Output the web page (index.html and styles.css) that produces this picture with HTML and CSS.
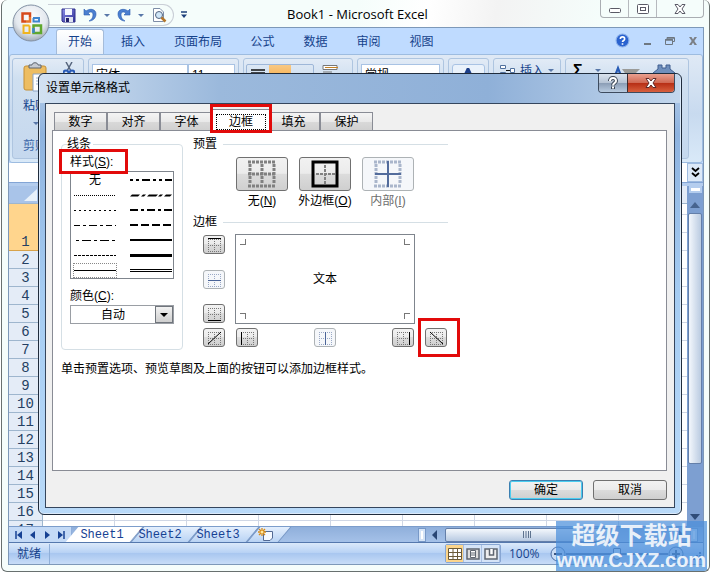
FILE: index.html
```html
<!DOCTYPE html>
<html lang="zh-CN">
<head>
<meta charset="utf-8">
<title>Book1 - Microsoft Excel</title>
<link rel="stylesheet" href="styles.css">
</head>
<body>
<svg width="0" height="0" class="defs" aria-hidden="true">
  <defs>
    <g id="grid-dots" fill="none" stroke-width="1" stroke-dasharray="1 1">
      <path d="M4 3.500H17M4 9.500H17M4 15.500H17M4.500 3V16M10.500 3V16M16.500 3V16"/>
    </g>
    <radialGradient id="orb" cx="50%" cy="35%" r="65%">
      <stop offset="0" stop-color="#fff"/><stop offset=".65" stop-color="#e3e8ee"/><stop offset="1" stop-color="#a3acb8"/>
    </radialGradient>
    <linearGradient id="disk" x1="0" y1="0" x2="1" y2="1">
      <stop offset="0" stop-color="#8b8fe8"/><stop offset="1" stop-color="#2f2f96"/>
    </linearGradient>
  </defs>
</svg>
<div class="window">
  <header class="titlebar">
    <div class="qat">
      <button aria-label="保存"><svg width="15" height="15" viewBox="0 0 15 15"><path d="M1 1H14V14H2L1 13Z" fill="url(#disk)" stroke="#31318c"/><path d="M4 1H11V7H4Z" fill="#f4f7ff"/><path d="M4 9H12V14H4Z" fill="#dfe3f0"/><path d="M5 10H8V14H5Z" fill="#23236e"/></svg></button>
      <button aria-label="撤消"><svg width="14" height="14" viewBox="0 0 14 14"><path d="M1 1V7H7L5 5C8 3 10 4 10 7C10 10 8 12 6 13C10 13 13 10 13 6C13 1 7 0 3 3Z" fill="#4b7fd0" stroke="#2c5eb0" stroke-width=".6"/></svg></button>
      <i class="caret"></i>
      <button aria-label="恢复"><svg width="14" height="14" viewBox="0 0 14 14"><path d="M13 1V7H7L9 5C6 3 4 4 4 7C4 10 6 12 8 13C4 13 1 10 1 6C1 1 7 0 11 3Z" fill="#4b7fd0" stroke="#2c5eb0" stroke-width=".6"/></svg></button>
      <i class="caret"></i>
      <button aria-label="打印预览"><svg width="16" height="16" viewBox="0 0 16 16"><path d="M2.500 1.500H9L12.500 5V14.500H2.500Z" fill="#fff" stroke="#7d8da6"/><circle cx="8" cy="8" r="3.500" fill="#cfe6f7" stroke="#52647f"/><path d="M10.500 10.500L14.500 14.500" stroke="#b4762a" stroke-width="2.500"/></svg></button>
    </div>
    <svg class="more" width="8" height="8" viewBox="0 0 8 8"><path d="M1 1H7" stroke="#1d3f7a" stroke-width="1.500"/><path d="M1 3.500H7L4 7Z" fill="#1d3f7a"/></svg>
    <h1>Book1 - Microsoft Excel</h1>
    <div class="winbtns">
      <button aria-label="最小化"><svg width="14" height="12" viewBox="0 0 14 12"><rect x="1.500" y="5.500" width="11" height="4" rx="1" fill="#fff" stroke="#5a5a66"/></svg></button>
      <button aria-label="最大化"><svg width="14" height="12" viewBox="0 0 14 12"><rect x="1.500" y="1.500" width="11" height="9" rx="1" fill="#fff" stroke="#5a5a66"/><rect x="4.500" y="4.500" width="5" height="3" fill="#fff" stroke="#5a5a66"/></svg></button>
      <button class="wide" aria-label="关闭"><svg width="14" height="12" viewBox="0 0 14 12"><path d="M2 1.500H5L7 4L9 1.500H12L9 6L12 10.500H9L7 8L5 10.500H2L5 6Z" fill="#fff" stroke="#5a5a66"/></svg></button>
    </div>
  </header>
  <button class="office" aria-label="Office 按钮"><svg width="38" height="38" viewBox="0 0 38 38">
    <circle cx="19" cy="19" r="18" fill="url(#orb)" stroke="#8290a3"/>
    <g fill="none" stroke-width="2.500">
      <path d="M18 13V9.500H10.500V17.500H14" stroke="#d64a1c"/><path d="M14 17.500H18V13" stroke="#e8762a"/>
      <path d="M21 14H27V17.500H21.500V14" stroke="#3f86cf" stroke-width="2"/>
      <path d="M17.500 21.500H11.500V29H17.500V21.500" stroke="#f0b41e" stroke-width="2"/>
      <path d="M21.500 21.500H29V29H21.500Z" stroke="#5fa82e"/><path d="M21.500 29V24" stroke="#3d86c8"/>
    </g></svg></button>

  <div class="frame">
    <nav class="ribbon-tabs">
      <button class="on">开始</button><button>插入</button><button class="w2">页面布局</button><button>公式</button><button>数据</button><button>审阅</button><button>视图</button>
      <div class="docbtns">
        <svg width="15" height="15" viewBox="0 0 14 14"><circle cx="7" cy="7" r="6" fill="#2a62cf" stroke="#8bb0ea"/><path d="M5 5.500C5 3 9 3 9 5.500C9 7 7 7 7 8.500M7 9.500V11" fill="none" stroke="#fff" stroke-width="1.500"/></svg>
        <svg width="9" height="10" viewBox="0 0 9 10"><path d="M1 8H8" stroke="#6e7780" stroke-width="2"/></svg>
        <svg width="10" height="10" viewBox="0 0 10 10"><path d="M2 3V1.500H9.500V5.500H8M.5 3.500H7.500V8.500H.5Z" fill="none" stroke="#6e7780"/><path d="M0 4H8M2 2H9" stroke="#6e7780" stroke-width="1.500"/></svg>
        <svg width="10" height="10" viewBox="0 0 10 10"><path d="M1 1H3.500L5 3.500L6.500 1H9L6.300 5L9 9H6.500L5 6.500L3.500 9H1L3.700 5Z" fill="#7b7f85"/></svg>
      </div>
    </nav>
    <div class="ribbon">
      <section class="group clip">
        <div class="clip-icons">
          <svg width="26" height="30" viewBox="0 0 26 30"><rect x="1" y="4" width="22" height="24" rx="2" fill="#edbd62" stroke="#c58f35"/><path d="M6 6V3H9C9 0 15 0 15 3H18V6Z" fill="#c5cad2" stroke="#5d646e"/><path d="M10 12H25V29H10Z" fill="#fff" stroke="#8ba3c4"/><path d="M13 16H22M13 19H22M13 22H22" stroke="#9cb3d4"/></svg>
          <svg width="12" height="18" viewBox="0 0 12 18"><path d="M3 0L8 9M9 0L4 9" stroke="#56657d" stroke-width="1.500"/><circle cx="3" cy="11" r="2.500" fill="none" stroke="#2a5cb8" stroke-width="2"/><circle cx="9" cy="11" r="2.500" fill="none" stroke="#2a5cb8" stroke-width="2"/></svg>
        </div>
        <span class="paste">粘贴</span><i class="caret"></i><span class="gname">剪贴板</span>
      </section>
      <section class="group font"><select aria-label="字体"><option>宋体</option></select><select class="size" aria-label="字号"><option>11</option></select></section>
      <section class="group align">
        <div class="alignset"><span><svg width="14" height="10" viewBox="0 0 14 10"><path d="M0 1H14M0 4H14M0 7H14" stroke="#111" stroke-width="1.500"/></svg></span><span class="lit"><svg width="14" height="10" viewBox="0 0 14 10"><path d="M0 5H14M2 8H12" stroke="#111" stroke-width="1.500"/></svg></span><span></span></div>
        <svg width="18" height="12" viewBox="0 0 18 12"><path d="M1 1.500H15V5.500H1Z" fill="#fff" stroke="#777"/><path d="M3 3.500H16" stroke="#c68224"/><path d="M1 8H10M1 11H8" stroke="#777"/></svg>
      </section>
      <section class="group num"><select aria-label="数字格式"><option>常规</option></select></section>
      <section class="group style"><div class="stylebox"><svg width="18" height="14" viewBox="0 0 18 14"><path d="M2 14L8 1L14 14" fill="none" stroke="#1c3f8a" stroke-width="3"/></svg></div></section>
      <section class="group cells"><svg width="17" height="12" viewBox="0 0 17 12"><path d="M1.500 1.500H6.500V4.500H1.500ZM1.500 8.500H6.500V11H1.500ZM11.500 4.500H15.500V8.500H11.500Z" fill="#fff" stroke="#51719e"/><path d="M7 6.500H11" stroke="#111"/></svg><span>插入</span><i class="caret"></i></section>
      <section class="group edit"><b>Σ</b><i class="caret"></i><svg width="28" height="14" viewBox="0 0 28 14"><path d="M0 14L5 1L10 14H7L5 7L3 14Z" fill="#275bb5"/><path d="M9 5H27L20 12H14Z" fill="#9b9b98"/></svg><svg width="22" height="12" viewBox="0 0 22 12"><path d="M5 1H9V4H13V1H17V5L22 9V12H0V9L5 5Z" fill="#6f8fbc" stroke="#405f90"/></svg></section>
    </div>
    <div class="formula"><input aria-label="编辑栏"><button aria-label="展开编辑栏"><svg width="9" height="12" viewBox="0 0 9 12"><path d="M1 1L4.500 4L8 1M1 6L4.500 9L8 6" fill="none" stroke="#000" stroke-width="1.800"/></svg></button></div>

    <div class="sheet">
      <div class="rows">
        <div class="corner"><svg width="14" height="12" viewBox="0 0 14 12"><path d="M14 0V12H1Z" fill="#e8f1fb"/></svg></div>
        <div class="tall">1</div><div>2</div><div>3</div><div>4</div><div>5</div><div>6</div><div>7</div><div>8</div><div>9</div><div>10</div><div>11</div><div>12</div><div>13</div><div>14</div><div>15</div><div>16</div><div>17</div>
      </div>
      <div class="cellarea"><div class="colhead"></div><div class="cells-grid"></div></div>
      <div class="vscroll"><i class="split"></i><svg width="10" height="6" viewBox="0 0 10 6"><path d="M5 0L10 6H0Z" fill="#47648f"/></svg><i class="thumb"></i><i class="track"></i><svg width="10" height="6" viewBox="0 0 10 6"><path d="M0 0H10L5 6Z" fill="#2f4c78"/></svg></div>
    </div>

    <div class="tabbar">
      <div class="nav">
        <svg width="8" height="8" viewBox="0 0 8 8"><path d="M1 0V8" stroke="#164193" stroke-width="1.500"/><path d="M7 0V8L2 4Z" fill="#164193"/></svg>
        <svg width="8" height="8" viewBox="0 0 8 8"><path d="M6 0V8L1 4Z" fill="#164193"/></svg>
        <svg width="8" height="8" viewBox="0 0 8 8"><path d="M2 0V8L7 4Z" fill="#164193"/></svg>
        <svg width="8" height="8" viewBox="0 0 8 8"><path d="M7 0V8" stroke="#164193" stroke-width="1.500"/><path d="M1 0V8L6 4Z" fill="#164193"/></svg>
      </div>
      <button class="stab on"><span>Sheet1</span></button><button class="stab"><span>Sheet2</span></button><button class="stab"><span>Sheet3</span></button>
      <button class="stab new" aria-label="插入工作表"><svg width="16" height="14" viewBox="0 0 16 14"><path d="M5.500 3.500H14.500V10L12 12.500H5.500Z" fill="#f5f9ff" stroke="#536a94"/><path d="M4 0V8M0 4H8M1 1L7 7M7 1L1 7" stroke="#d78a16" stroke-width="1.300"/><circle cx="4" cy="4" r="1.500" fill="#ffe9a0"/></svg></button>
      <div class="hscroll"><i class="hsplit"></i><svg width="6" height="10" viewBox="0 0 6 10"><path d="M5 0V10L0 5Z" fill="#294675"/></svg><div class="hthumb"><svg width="8" height="7" viewBox="0 0 8 7"><path d="M.5 0V7M3 0V7M5.500 0V7M7.500 0V7" stroke="#5e738f"/></svg></div><svg width="6" height="10" viewBox="0 0 6 10"><path d="M1 0V10L6 5Z" fill="#294675"/></svg><i class="hsplit"></i></div>
    </div>
    <footer class="status">
      <span class="ready">就绪</span>
      <div class="views">
        <button class="on" aria-label="普通"><svg width="14" height="12" viewBox="0 0 14 12"><path d="M.5 .5H13.500V11.500H.5ZM.5 4.500H13.500M.5 8.500H13.500M5 .5V11.500M9.500 .5V11.500" fill="#fff" stroke="#6a5a38"/></svg></button>
        <button aria-label="页面布局"><svg width="14" height="12" viewBox="0 0 14 12"><path d="M1 1H13V11H1Z" fill="#ddd" stroke="#5f6670" stroke-width="1.500"/><path d="M4.500 2.500H9.500V9.500H4.500Z" fill="#fff" stroke="#5f6670"/><path d="M5 5H9M5 7H9" stroke="#5f6670"/></svg></button>
        <button aria-label="分页预览"><svg width="14" height="12" viewBox="0 0 14 12"><path d="M1 1H13V11H1Z" fill="#eee" stroke="#5f6670" stroke-width="1.500"/><path d="M5.500 1V7H9.500V1M9.500 7V1" fill="#fff" stroke="#5f6670" stroke-width="1.500"/></svg></button>
      </div>
      <span class="pct">100%</span>
      <svg width="16" height="16" viewBox="0 0 16 16"><circle cx="8" cy="8" r="7" fill="#cadcf4" stroke="#4c6ea5"/><path d="M4 8H12" stroke="#3d5680" stroke-width="2"/></svg>
      <input type="range" aria-label="缩放" min="0" max="100" value="50">
      <svg width="16" height="16" viewBox="0 0 16 16"><circle cx="8" cy="8" r="7" fill="#cadcf4" stroke="#4c6ea5"/><path d="M4 8H12M8 4V12" stroke="#3d5680" stroke-width="2"/></svg>
      <svg class="grip" width="9" height="9" viewBox="0 0 9 9"><path d="M6 0H8V2H6ZM6 3H8V5H6ZM3 3H5V5H3ZM6 6H8V8H6ZM3 6H5V8H3ZM0 6H2V8H0Z" fill="#3f66a3"/></svg>
    </footer>
  </div>

  <div class="dialog" role="dialog" aria-labelledby="dlg-title">
    <div class="dlg-title"><h2 id="dlg-title">设置单元格格式</h2>
      <div class="dlg-btns">
        <button aria-label="帮助"><svg width="12" height="14" viewBox="0 0 12 14"><path d="M3 5C3 1 9 1 9 5C9 7 6 7 6 9.500M6 10.500V13" fill="none" stroke="#3a4655" stroke-width="4"/><path d="M3 5C3 1 9 1 9 5C9 7 6 7 6 9.500M6 10.500V12.500" fill="none" stroke="#fff" stroke-width="2"/></svg></button>
        <button class="x" aria-label="关闭"><svg width="14" height="12" viewBox="0 0 14 12"><path d="M2 1.500H5L7 4L9 1.500H12L9 6L12 10.500H9L7 8L5 10.500H2L5 6Z" fill="#fff" stroke="#5f2a2a"/></svg></button>
      </div>
    </div>
    <div class="client">
      <div class="tabs" role="tablist">
        <button role="tab">数字</button><button role="tab">对齐</button><button role="tab">字体</button><button role="tab" class="on" aria-selected="true"><span>边框</span><i class="callout"></i></button><button role="tab">填充</button><button role="tab">保护</button>
      </div>
      <div class="page">
        <div class="cols">
          <fieldset>
            <legend>线条</legend>
            <div class="lbl marked" id="style-label">样式(<u>S</u>):<i class="callout"></i></div>
            <div class="linebox" role="listbox" aria-labelledby="style-label">
              <button role="option">无</button>
              <button role="option" aria-label="双点划线 粗"><svg viewBox="0 0 42 9"><path d="M0 4H42" stroke-width="2" stroke-dasharray="3 3 3 3 8 3"/></svg></button>
              <button role="option" aria-label="点线"><svg viewBox="0 0 42 9"><path d="M0 4.500H42" stroke-dasharray="1 1"/></svg></button>
              <button role="option" aria-label="斜点划线"><svg viewBox="0 0 42 9"><path d="M0 5.500H8L10 3.500H2ZM11 5.500H14L16 3.500H13ZM17 5.500H26L28 3.500H19ZM28 5.500H31L33 3.500H30ZM34 5.500H40L42 3.500H36Z" fill="#000" stroke="none"/></svg></button>
              <button role="option" aria-label="短划线"><svg viewBox="0 0 42 9"><path d="M0 4.500H42" stroke-dasharray="2 3"/></svg></button>
              <button role="option" aria-label="点划线 粗"><svg viewBox="0 0 42 9"><path d="M0 4H42" stroke-width="2" stroke-dasharray="8 3 3 3"/></svg></button>
              <button role="option" aria-label="双点划线"><svg viewBox="0 0 42 9"><path d="M0 4.500H42" stroke-dasharray="6 3 3 3 8 3 3 3"/></svg></button>
              <button role="option" aria-label="虚线 粗"><svg viewBox="0 0 42 9"><path d="M0 4H42" stroke-width="2" stroke-dasharray="8 3"/></svg></button>
              <button role="option" aria-label="点划线"><svg viewBox="0 0 42 9"><path d="M2 4.500H42" stroke-dasharray="3 3 9 3"/></svg></button>
              <button role="option" aria-label="中等实线"><svg viewBox="0 0 42 9"><path d="M0 4H42" stroke-width="2"/></svg></button>
              <button role="option" aria-label="虚线"><svg viewBox="0 0 42 9"><path d="M0 4.500H42" stroke-dasharray="3 1"/></svg></button>
              <button role="option" aria-label="粗实线"><svg viewBox="0 0 42 9"><path d="M0 4.500H42" stroke-width="3"/></svg></button>
              <button role="option" aria-selected="true" class="sel" aria-label="细实线"><svg viewBox="0 0 42 9"><path d="M0 4.500H42"/></svg></button>
              <button role="option" aria-label="双线"><svg viewBox="0 0 42 9"><path d="M0 3.500H42M0 5.500H42"/></svg></button>
            </div>
            <label class="lbl color" for="color">颜色(<u>C</u>):</label>
            <div class="combo"><select id="color"><option>自动</option></select><span><svg width="8" height="4" viewBox="0 0 8 4"><path d="M0 0H8L4 4Z"/></svg></span></div>
          </fieldset>
          <div class="right">
            <h3>预置</h3>
            <div class="presets">
              <div><button id="p-none"><svg width="28" height="28" viewBox="0 0 28 28"><path d="M0 2H28M0 14H28M0 26H28M2 4V24M14 4V24M26 4V24" stroke="#808080" stroke-width="3" stroke-dasharray="3 1"/></svg></button><label for="p-none">无(<u>N</u>)</label></div>
              <div><button id="p-out"><svg width="28" height="28" viewBox="0 0 28 28"><path d="M2 2H26V26H2Z" fill="none" stroke="#000" stroke-width="3"/><path d="M5 14H24M14 5V24" stroke="#808080" stroke-width="2" stroke-dasharray="3 1"/></svg></button><label for="p-out">外边框(<u>O</u>)</label></div>
              <div class="off"><button id="p-in" disabled><svg width="28" height="28" viewBox="0 0 28 28"><path d="M0 2H28M0 26H28M2 4V24M26 4V24" stroke="#aab6cb" stroke-width="3" stroke-dasharray="3 1"/><path d="M1 14H27M14 1V27" stroke="#536c9c" stroke-width="2"/></svg></button><label for="p-in">内部(<u>I</u>)</label></div>
            </div>
            <h3>边框</h3>
            <div class="borders">
              <div class="side">
                <button aria-label="上边框"><svg viewBox="0 0 20 17"><use href="#grid-dots"/><path d="M4 2.500H17" class="k"/></svg></button>
                <button disabled aria-label="内部横线"><svg viewBox="0 0 20 17"><use href="#grid-dots"/><path d="M4 9.500H17" class="k"/></svg></button>
                <button aria-label="下边框"><svg viewBox="0 0 20 17"><use href="#grid-dots"/><path d="M4 15.500H17" class="k"/></svg></button>
              </div>
              <div class="preview"><i></i><i></i><span>文本</span><i></i><i></i></div>
              <span></span>
              <button aria-label="左斜线"><svg viewBox="0 0 20 17"><use href="#grid-dots"/><path d="M4 15L17 3" class="k"/></svg></button>
              <div class="below">
                <button aria-label="左边框"><svg viewBox="0 0 20 17"><use href="#grid-dots"/><path d="M4.500 3V16" class="k"/></svg></button>
                <button disabled aria-label="内部竖线"><svg viewBox="0 0 20 17"><use href="#grid-dots"/><path d="M10.500 3V16" class="k"/></svg></button>
                <button aria-label="右边框"><svg viewBox="0 0 20 17"><use href="#grid-dots"/><path d="M16.500 3V16" class="k"/></svg></button>
              </div>
              <button class="marked" aria-label="右斜线"><svg viewBox="0 0 20 17"><use href="#grid-dots"/><path d="M4 3L17 15" class="k"/></svg><i class="callout"></i></button>
            </div>
          </div>
        </div>
        <p>单击预置选项、预览草图及上面的按钮可以添加边框样式。</p>
      </div>
      <div class="actions"><button class="default">确定</button><button>取消</button></div>
    </div>
  </div>
  <div class="watermark"><b>超级下载站</b><b class="url">www.CJXZ.com</b></div>
</div>
</body>
</html>
```
FILE: styles.css
```css
* { box-sizing: border-box; }
body {
  margin: 0;
  font: 12px/14px "Liberation Sans", "Noto Sans CJK SC", sans-serif;
  color: #000;
  background: #fff;
}
button, input, select { font: inherit; color: inherit; margin: 0; padding: 0; border: 0; background: none; }
select { appearance: none; }
svg { display: block; flex: none; }
h1, h2, h3, p { margin: 0; font-size: 12px; font-weight: normal; }
.defs { position: absolute; }

/* application window */
.window {
  position: relative;
  display: flex;
  flex-direction: column;
  height: 100vh;
  overflow: hidden;
  margin: 0 2px 0 1px;
  padding: 0 5px 6px 6px;
  background: #f5fdfb;
  border: 1px solid #68706f;
  border-top: 0;
  border-radius: 6px;
}
.titlebar {
  display: flex;
  flex: none;
  height: 27px;
  padding-left: 40px;
  background: linear-gradient(100deg, #f5fdfb 50%, #fff 60%, #f3f3f3 70%, #f5fdfb 85%);
}
.qat {
  display: flex;
  align-items: center;
  gap: 7px;
  width: 126px;
  height: 22px;
  margin-top: 4px;
  padding-left: 13px;
  border: 1px solid #c9ced6;
  border-left: 0;
  border-radius: 0 12px 12px 0;
}
.more { margin: 11px 0 0 6px; }
.caret { flex: none; border: 3px solid transparent; border-top: 3px solid #5877a8; border-bottom: 0; }
.titlebar h1 {
  flex: 1;
  padding-left: 99px;
  font-family: "Open Sans", "Noto Sans", sans-serif;
  font-size: 13px;
  line-height: 28px;
  white-space: nowrap;
}
.winbtns {
  display: flex;
  height: 18px;
  border: 1px solid #a9adb2;
  border-top: 0;
  border-radius: 0 0 4px 4px;
}
.winbtns button { display: grid; place-items: center; width: 28px; border-right: 1px solid #b6b9be; }
.winbtns .wide { width: 46px; border: 0; }
.office { position: absolute; left: 10px; top: 4px; z-index: 1; }

.frame { display: flex; flex: 1; flex-direction: column; min-height: 0; border: 1px solid #7d98b8; background: #bfdbff; }

/* ribbon */
.ribbon-tabs { display: flex; flex: none; height: 26px; padding-left: 47px; align-items: flex-end; color: #15428b; }
.ribbon-tabs button { width: 48px; height: 25px; margin-right: 5px; }
.ribbon-tabs button:nth-child(n + 4) { width: 53px; margin: 0; }
.ribbon-tabs .on { background: linear-gradient(#fff, #e8f0fa); border: 1px solid #a5bcda; border-bottom: 0; border-radius: 3px 3px 0 0; }
.ribbon-tabs .w2 { width: 72px; margin-right: 2px; }
.docbtns { display: flex; align-items: center; gap: 13px; margin-left: auto; padding: 0 5px 6px 0; }
.ribbon {
  display: flex;
  flex: none;
  gap: 4px;
  height: 109px;
  padding: 3px 2px;
  background: linear-gradient(#dfe9f5, #c8daef 55%, #d9e9f8);
  border: 1px solid #9dbce0;
  border-radius: 3px;
}
.group { display: flex; flex: none; gap: 4px; align-items: flex-start; padding: 5px 3px; border: 1px solid #aec5e0; border-radius: 3px; background: linear-gradient(#e2ebf6, #cfdff0 20%, #c5d8ee); }
.clip { flex-direction: column; width: 72px; padding: 3px 10px; color: #15428b; gap: 7px; }
.clip-icons { display: flex; gap: 14px; }
.clip .caret { margin: 2px 0 0 10px; }
.gname { margin-top: 7px; color: #3e6aaa; white-space: nowrap; }
.font { width: 151px; gap: 0; }
.font select, .num select {
  width: 96px;
  height: 22px;
  padding-left: 3px;
  background: conic-gradient(from -45deg at 50% 100%, #5877a8 90deg, transparent 0) right 6px top 9px / 6px 3px no-repeat #fff;
  background: linear-gradient(#5877a8, #5877a8) right 6px top 9px / 6px 2px no-repeat #fff;
  border: 1px solid #a9c3e4;
}
.font .size { width: 47px; }
.align { width: 110px; padding-left: 2px; gap: 8px; }
.alignset { display: flex; border: 1px solid #9eb7d8; border-radius: 2px; }
.alignset span { display: grid; place-items: center; width: 22px; height: 18px; }
.alignset .lit { background: linear-gradient(#f7c884, #fba93c); }
.num { width: 87px; }
.num select { width: 80px; }
.style { width: 41px; }
.stylebox { width: 33px; height: 24px; padding: 3px 7px; background: #eaf2fb; border: 1px solid #a9c3e4; border-radius: 3px; }
.cells { width: 68px; padding-left: 5px; color: #15428b; white-space: nowrap; }
.cells .caret, .edit .caret { margin-top: 5px; }
.edit { width: 124px; padding-left: 7px; gap: 12px; }
.edit b { font-size: 16px; }

.formula { display: flex; flex: none; height: 20px; background: #fff; border-bottom: 1px solid #83a5d5; }
.formula input { flex: 1; min-width: 0; }
.formula button { display: grid; place-items: center; width: 16px; background: #dce9f8; border: 1px solid #9ebbe0; }

/* worksheet */
.sheet { display: flex; flex: 1; min-height: 0; overflow: hidden; border-top: 3px solid #b4cdee; }
.rows { width: 34px; overflow: hidden; font: 14px/16px "Liberation Mono", monospace; color: #243f62; text-align: center; background: #e4ecf7; border-right: 1px solid #9eb6ce; }
.rows > div { height: 18px; padding-top: 1px; border-bottom: 1px solid #9eb6ce; }
.rows .tall { display: flex; align-items: flex-end; justify-content: center; height: 47px; background: #ffd58d; border-color: #d7a24a; }
.rows .corner { display: flex; justify-content: flex-end; padding: 3px 5px; background: #a9c4e9; }
.cellarea { display: flex; flex: 1; flex-direction: column; }
.colhead { height: 18px; background: #e4ecf7; border-bottom: 1px solid #9eb6ce; }
.cells-grid {
  flex: 1;
  background:
    repeating-linear-gradient(90deg, transparent 0 71px, #d0d7e5 71px 72px),
    repeating-linear-gradient(#fff 0 10px, #d0d7e5 10px 11px, #fff 11px 18px);
}
.vscroll { display: flex; flex-direction: column; align-items: center; width: 16px; background: #7d9fd1; }
.split { width: 13px; height: 7px; margin-bottom: 9px; background: #fff; border: 2px solid #b4cdee; }
.thumb { flex: 5; width: 14px; margin-top: 5px; background: linear-gradient(90deg, #f3f7fc, #bacbe1); border: 1px solid #647fa9; border-radius: 2px; }
.track { flex: 1; }
.vscroll svg:last-child { margin-bottom: 6px; }

.tabbar { display: flex; flex: none; height: 17px; background: linear-gradient(#8fafdb, #a5c1e8); border-top: 1px solid #7c9dcb; border-bottom: 1px solid #5578ad; overflow: hidden; }
.nav { display: flex; justify-content: space-between; align-items: center; width: 63px; padding: 0 6px; background: #c4daf6; border-right: 1px solid #8faedb; }
.stab { position: relative; width: 58px; font: 12px/14px "Liberation Mono", monospace; color: #164193; z-index: 0; }
.stab::before { content: ""; position: absolute; z-index: -1; inset: 0 -7px 0 7px; background: linear-gradient(#e4effd, #b9d3f4); border: 1px solid #7695c2; border-width: 0 1px; transform: skewX(-40deg); }
.stab.on::before { background: #fff; border-left: 0; box-shadow: -7px 0 #fff; }
.stab span { margin-left: 2px; }
.stab.new { width: 32px; display: grid; place-items: center; padding-left: 7px; }
.hscroll { display: flex; flex: 1; align-items: center; gap: 7px; padding: 0 6px 0 141px; }
.hsplit { width: 6px; height: 12px; background: #fff; border: 2px solid #d5e4f7; outline: 1px solid #7899c8; }
.hthumb { display: grid; flex: 0 1 164px; height: 14px; margin-right: auto; place-items: center; background: linear-gradient(#f3f7fc, #b8cae2); border: 1px solid #647fa9; border-radius: 2px; }

.status { display: flex; flex: none; align-items: center; height: 21px; color: #15428b; background: linear-gradient(#dbe9fa, #b9d3f5 45%, #a9c7f0 50%, #c7dcf7); }
.ready { width: 41px; padding-left: 8px; line-height: 20px; border-right: 1px solid #8fafd9; }
.views { display: flex; margin-left: auto; border: 1px solid #87a6d3; border-radius: 2px; background: #d5e4f7; }
.views button { display: grid; place-items: center; width: 18px; height: 17px; border-right: 1px solid #a9c0e2; }
.views .on { background: #fbd58c; }
.pct { width: 49px; padding-left: 8px; font-family: "Open Sans", sans-serif; }
.status input { appearance: none; width: 102px; height: 14px; }
.status input::-webkit-slider-runnable-track { height: 2px; background: #4c6ea5; }
.status input::-webkit-slider-thumb { appearance: none; width: 8px; height: 12px; margin-top: -5px; background: #dbe8fa; border: 1px solid #466692; border-radius: 1px 1px 4px 4px; }
.grip { margin: 6px 1px 0 9px; }

/* format cells dialog */
.dialog {
  position: absolute;
  left: 36px;
  right: 27px;
  top: 73px;
  padding: 0 6px 6px;
  background: linear-gradient(#b9cfe9, #8eb3df 60px, #a5ccf2 50%, #b9daf9);
  border: 1px solid #202c3c;
  border-radius: 6px;
  box-shadow: inset 0 0 0 1px #dceafa;
}
.dlg-title { display: flex; justify-content: space-between; height: 29px; margin: 0 -5px; padding: 0 5px 0 6px; border-radius: 5px 5px 0 0; background: linear-gradient(90deg, #d2e1f2, #9bb9dc 28%, #8fb0d8 70%, #c3d7ed); }
.dlg-title h2 { line-height: 28px; }
.dlg-btns { display: flex; height: 19px; border: 1px solid #3d4b5e; border-top: 0; border-radius: 0 0 4px 4px; overflow: hidden; }
.dlg-btns button { display: grid; place-items: center; width: 28px; background: linear-gradient(#dbe3ed, #b5c3d4 50%, #8b9db5 51%, #b8cbe0); }
.dlg-btns .x { width: 47px; border-left: 1px solid #3d2b2e; background: linear-gradient(#eaa08f, #d06a55 48%, #b62d14 50%, #d8603e); }
.client { padding: 5px 7px 7px 6px; background: #f0f0f0; border: 1px solid #35465d; }
.tabs { display: flex; align-items: flex-end; height: 21px; padding-left: 2px; }
.tabs button { flex: 0 0 53px; height: 18px; background: linear-gradient(#f4f4f4, #e9e9e9 50%, #d9d9d9 52%, #d0d0d0); border: 1px solid #898c95; border-bottom: 0; }
.tabs button.on { position: relative; z-index: 1; flex-basis: 58px; height: 22px; margin: 0 -3px -1px -1px; background: #fff; }
.tabs .on span { display: block; margin: 4px 4px 2px; line-height: 14px; outline: 1px dotted #000; }
.callout { position: absolute; border: 3px solid #e20a0a; pointer-events: none; }
.tabs .callout { inset: -6px -3px -2px -3px; }
.page { min-height: 341px; padding: 7px 8px; background: #fff; border: 1px solid #898c95; }
.cols { display: flex; gap: 10px; }
fieldset { width: 122px; min-width: 0; margin: 0; padding: 0 8px 25px; border: 1px solid #d5dfe5; border-radius: 4px; }
legend { margin-left: -3px; padding: 0 2px 0 0; line-height: 12px; }
.marked { position: relative; }
.lbl { display: block; width: max-content; margin: 5px 0 2px; }
.lbl .callout { inset: -6px -15px -5px -11px; }
.lbl.color { margin-top: 10px; }
.linebox { display: grid; grid-template-columns: 42px 42px; grid-auto-rows: 15px; column-gap: 14px; padding: 1px 3px 0; border: 1px solid #7f858d; }
.linebox button { height: 13px; line-height: 13px; align-self: center; }
.linebox svg { width: 42px; height: 9px; fill: none; stroke: #000; }
.linebox .sel { outline: 1px dotted #888; }
.combo { display: flex; height: 19px; border: 1px solid #9a9ea4; }
.combo select { flex: 1; min-width: 0; text-align-last: center; }
.combo span { display: grid; place-items: center; width: 18px; background: linear-gradient(#f2f2f2, #cfcfcf); border: 1px solid #70757c; }
.right { width: 255px; }
h3 { display: flex; align-items: center; gap: 6px; line-height: 12px; }
h3::after { content: ""; flex: 1; height: 1px; background: #d5dfe5; }
.presets { display: flex; gap: 11px; margin: 7px 0 8px 43px; }
.presets > div { width: 52px; }
.presets label { display: block; width: 64px; margin: 3px -6px 0; text-align: center; }
.presets button, .borders button, .actions button {
  display: grid;
  place-items: center;
  background: linear-gradient(#f2f2f2, #ebebeb 48%, #dcdcdc 50%, #cfcfcf);
  border: 1px solid #707070;
  border-radius: 3px;
}
.presets button { width: 52px; height: 34px; }
.off label { color: #6d6d6d; }
.presets button:disabled, .borders button:disabled { background: #f5f7fa; border-color: #adb2b5; }
.borders { display: grid; grid-template-columns: 22px 180px 22px; grid-template-rows: 90px auto; gap: 4px 10px; margin: 6px 0 0 10px; }
.borders button { width: 22px; height: 19px; stroke: #777; }
.borders button svg { width: 20px; height: 17px; }
.borders button:disabled { stroke: #9aa9c6; }
.k { stroke: #000; fill: none; }
.borders button:disabled .k { stroke: #4b6498; }
.side { display: flex; flex-direction: column; justify-content: space-between; padding: 1px 0; }
.below { display: flex; justify-content: space-between; padding: 0 1px; }
.preview { display: grid; grid-template-columns: 6px 1fr 6px; grid-template-rows: 6px 1fr 6px; padding: 4px; border: 1px solid #7f858d; }
.preview span { grid-area: 2 / 2; place-self: center; }
.preview i { border: 0 solid #777; }
.preview i:nth-of-type(1) { grid-area: 1 / 1; border-width: 0 1px 1px 0; }
.preview i:nth-of-type(2) { grid-area: 1 / 3; border-width: 0 0 1px 1px; }
.preview i:nth-of-type(3) { grid-area: 3 / 1; border-width: 1px 1px 0 0; }
.preview i:nth-of-type(4) { grid-area: 3 / 3; border-width: 1px 0 0 1px; }
.borders .callout { inset: -11px -14px -11px -8px; }
.page p { margin-top: 12px; }
.actions { display: flex; justify-content: flex-end; gap: 10px; padding-top: 9px; }
.actions button { width: 74px; height: 20px; }
.actions .default { border-color: #3c7fb1; box-shadow: inset 0 0 0 1px #4bcdf0; }

.watermark { position: absolute; right: 2px; bottom: 0; width: 151px; padding-top: 2px; text-align: center; color: #fff; background: #4b8fdbb8; white-space: nowrap; }
.watermark b { display: block; font-size: 24px; line-height: 26px; opacity: .85; }
.watermark .url { font-size: 20px; line-height: 22px; }
```
